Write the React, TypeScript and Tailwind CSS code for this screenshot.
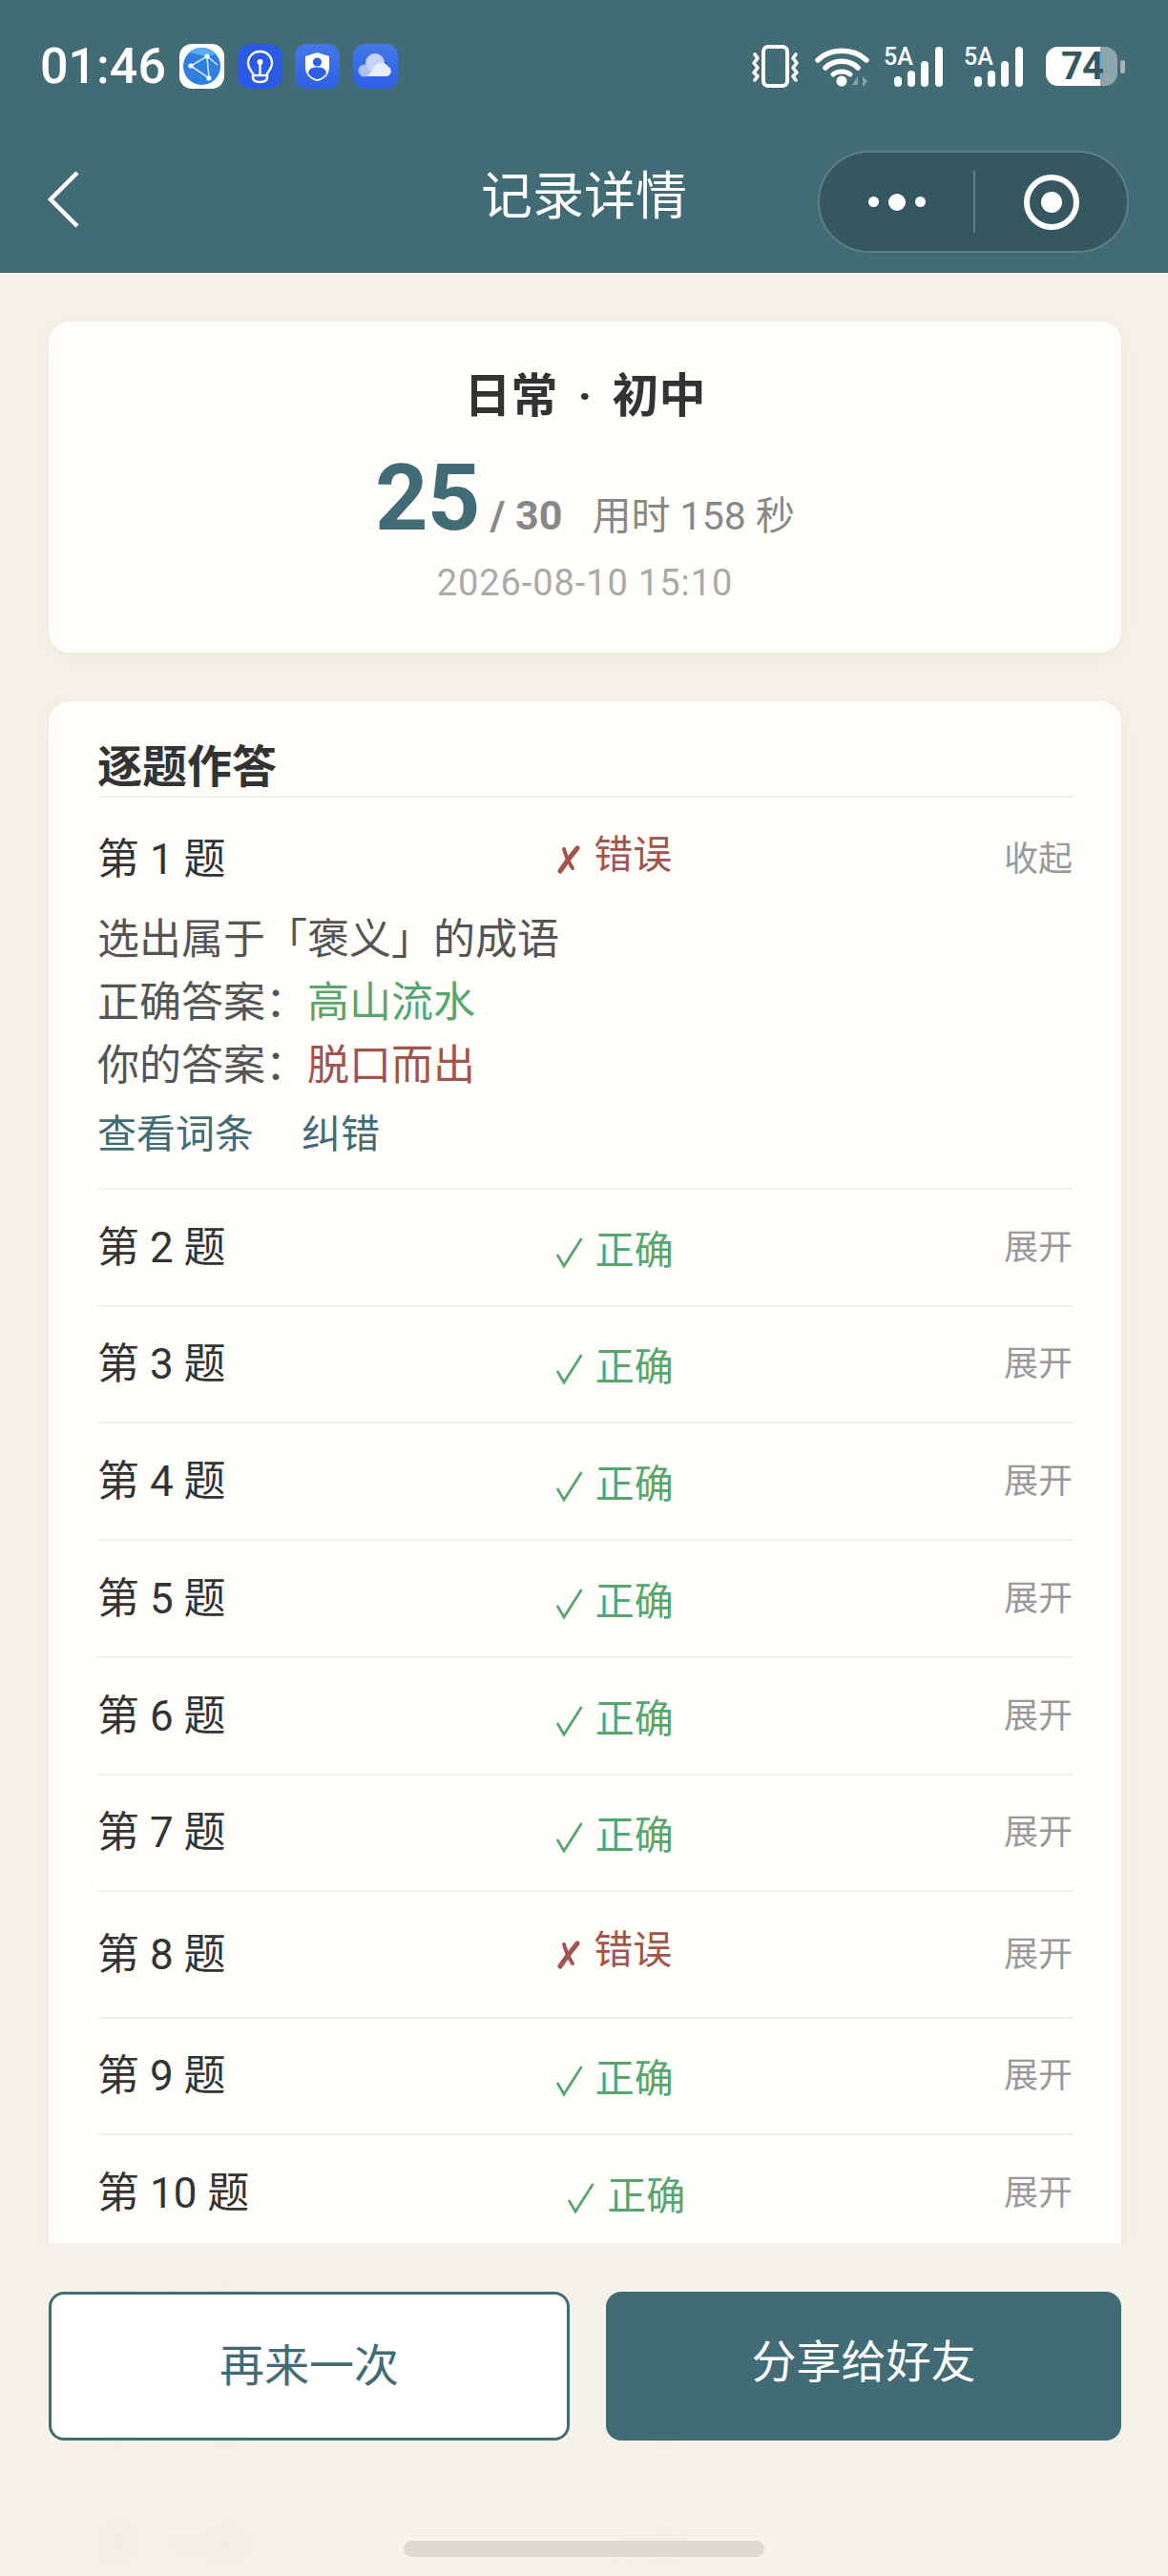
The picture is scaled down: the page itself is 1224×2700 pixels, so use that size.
import React from 'react';

const rows = [
    { n: 2, ok: true, h: 'h-[123px]' },
    { n: 3, ok: true, h: 'h-[122px]' },
    { n: 4, ok: true, h: 'h-[123px]' },
    { n: 5, ok: true, h: 'h-[123px]' },
    { n: 6, ok: true, h: 'h-[123px]' },
    { n: 7, ok: true, h: 'h-[122px]' },
    { n: 8, ok: false, h: 'h-[133px]' },
    { n: 9, ok: true, h: 'h-[122px]' },
    { n: 10, ok: true, h: 'h-[123px]' },
    { n: 11, ok: true, h: 'h-[123px]' },
    { n: 12, ok: true, h: 'h-[123px]' },
    { n: 13, ok: true, h: 'h-[123px]' },
];

const Status = ({ ok }: { ok: boolean }) =>
    ok ? (
        <div className="flex items-center gap-[13px] mt-[6px] text-[41px] leading-[50px] text-[#55a76e]">
            <svg width="28" height="34" viewBox="0 0 28 34" fill="none" className="mt-[4px]">
                <path d="M1 19 L8 31 L26.5 2" stroke="currentColor" strokeWidth="2.8" />
            </svg>
            <span>正确</span>
        </div>
    ) : (
        <div className="flex items-center gap-[14px] mb-[10px] text-[41px] leading-[50px] text-[#a2544e]">
            <svg width="24" height="30" viewBox="0 0 24 30" fill="none" className="mt-[10px]">
                <path d="M3 27 C9 18 15 10 21 3" stroke="currentColor" strokeWidth="5" strokeLinecap="round" />
                <path d="M7 4 C9 11 12 18 16 24" stroke="currentColor" strokeWidth="4" strokeLinecap="round" />
            </svg>
            <span>错误</span>
        </div>
    );

const Signal = () => (
    <div className="relative w-[70px] h-[45px]">
        <span className="absolute left-0 top-0 text-[25px] leading-[25px] font-medium text-white">5A</span>
        <svg width="70" height="45" viewBox="0 0 70 45" fill="white">
            <rect x="11" y="33" width="8" height="11" rx="4" />
            <rect x="25" y="27" width="8" height="17" rx="4" />
            <rect x="39" y="17" width="8" height="27" rx="4" />
            <rect x="54" y="2" width="8" height="42" rx="4" />
        </svg>
    </div>
);

const StatusBar = () => (
    <div className="flex items-center justify-between h-[140px] pl-[42px] pr-[45px] pb-[1px] text-white">
        <div className="flex items-center">
            <span className="w-[146px] text-[52px] leading-[50px] font-medium">01:46</span>
            <div className="flex gap-[13.5px]">
                <svg width="47" height="47" viewBox="0 0 47 47">
                    <rect width="47" height="47" rx="13" fill="#fff" />
                    <circle cx="23.5" cy="23.5" r="19.5" fill="#2f7fe0" />
                    <path d="M10 9 A19.5 19.5 0 0 1 38 11 L28 13 Z" fill="#58abf0" />
                    <path d="M12 23 L29 13 L31 36 M12 23 L31 36 M29 13 L40 22" stroke="#cfe6fb" strokeWidth="1.6" fill="none" />
                    <circle cx="12" cy="23" r="2.6" fill="#fff" />
                    <circle cx="29" cy="13" r="2.6" fill="#fff" />
                    <circle cx="31" cy="36" r="2.6" fill="#fff" />
                </svg>
                <svg width="47" height="47" viewBox="0 0 47 47">
                    <rect width="47" height="47" rx="14" fill="#2a5ae6" />
                    <path d="M23.5 8 C15.5 8 11 14 11 20 C11 25 14 28 16 31 L16 35 C16 38 18 40 23.5 40 C29 40 31 38 31 35 L31 31 C33 28 36 25 36 20 C36 14 31.5 8 23.5 8 Z" fill="none" stroke="#fff" strokeWidth="2.4" />
                    <path d="M16 33 L31 33" stroke="#fff" strokeWidth="2.4" />
                    <path d="M23.5 20 L23.5 32" stroke="#fff" strokeWidth="2.4" />
                    <circle cx="23.5" cy="19" r="3" fill="#fff" />
                </svg>
                <svg width="47" height="47" viewBox="0 0 47 47">
                    <defs>
                        <linearGradient id="sh" x1="0" y1="0" x2="0" y2="1">
                            <stop offset="0" stopColor="#4478e6" />
                            <stop offset="1" stopColor="#2c5fe6" />
                        </linearGradient>
                    </defs>
                    <rect width="47" height="47" rx="12" fill="url(#sh)" />
                    <path d="M23.5 9 L36 13 L36 25 C36 33 29 38 23.5 39 C18 38 11 33 11 25 L11 13 Z" fill="#fff" />
                    <circle cx="23.5" cy="19" r="4.6" fill="#2c5fe6" />
                    <path d="M14 31 C15 25 19 24.5 23.5 24.5 C28 24.5 32 25 33 31 C30 35 27 36.5 23.5 37 C20 36.5 17 35 14 31 Z" fill="#2c5fe6" />
                </svg>
                <svg width="47" height="47" viewBox="0 0 47 47">
                    <defs>
                        <linearGradient id="cl" x1="0" y1="0" x2="0" y2="1">
                            <stop offset="0" stopColor="#4478e6" />
                            <stop offset="1" stopColor="#2c5fe6" />
                        </linearGradient>
                    </defs>
                    <rect width="47" height="47" rx="12" fill="url(#cl)" />
                    <circle cx="12" cy="28" r="6.5" fill="#a9c2f6" />
                    <circle cx="23" cy="20" r="10" fill="#c4d4f9" />
                    <path d="M12 34 C20 34 19 21 29 20 C35 20 36 23 37 24 C41 25 41 34 35 34 Z" fill="#e8edfb" />
                </svg>
            </div>
        </div>
        <div className="flex items-center">
            <svg width="52" height="46" viewBox="0 0 52 46" fill="none" stroke="white">
                <rect x="13" y="2" width="25" height="41" rx="5" strokeWidth="4" />
                <path d="M4 10 L7 14 L3 19 L7 24 L3 29 L7 33 L4 37" strokeWidth="3.6" strokeLinecap="round" strokeLinejoin="round" />
                <path d="M47 10 L44 14 L48 19 L44 24 L48 29 L44 33 L47 37" strokeWidth="3.6" strokeLinecap="round" strokeLinejoin="round" />
            </svg>
            <svg width="58" height="44" viewBox="0 0 58 44" fill="none" className="ml-[15px]">
                <path d="M3 15 C16 2 40 2 54 15" stroke="white" strokeWidth="5.5" strokeLinecap="round" />
                <path d="M11 23 C20 14 36 14 45 23" stroke="white" strokeWidth="5.5" strokeLinecap="round" />
                <path d="M19 30 C24 26 32 26 37 30" stroke="white" strokeWidth="5" strokeLinecap="round" />
                <circle cx="28" cy="37" r="5.5" fill="white" />
                <path d="M39 41 L45 32 L45 41 Z M50 32 L50 43 L55 37 Z" fill="#8ba3a8" />
            </svg>
            <div className="ml-[14px]">
                <Signal />
            </div>
            <div className="ml-[14px]">
                <Signal />
            </div>
            <div className="relative ml-[16px] w-[75px] h-[41px] rounded-[13px] bg-white/40">
                <div className="absolute left-0 top-0 bottom-0 w-[57px] rounded-l-[13px] bg-white" />
                <span className="absolute left-[16px] top-0 text-[40px] leading-[41px] font-bold text-[#35575f] tracking-[-1px]">74</span>
            </div>
            <div className="ml-[3px] w-[5px] h-[14px] rounded-[3px] bg-white/50" />
        </div>
    </div>
);

const NavBar = () => (
    <div className="relative flex items-center justify-center h-[146px] pb-[12px] text-white">
        <svg width="34" height="60" viewBox="0 0 34 60" fill="none" className="absolute left-[49px] top-[39px]">
            <path d="M32 2 L4 30 L32 58" stroke="white" strokeWidth="4.5" />
        </svg>
        <span className="text-[54px] leading-[60px] font-normal">记录详情</span>
        <div className="absolute left-[857px] top-[18px] flex items-center w-[326px] h-[107px] rounded-full bg-[#35575f] border-2 border-[#5f7e85]">
            <div className="flex items-center justify-center w-[161px] gap-[10px]">
                <span className="w-[11px] h-[11px] rounded-full bg-white" />
                <span className="w-[18px] h-[18px] rounded-full bg-white" />
                <span className="w-[11px] h-[11px] rounded-full bg-white" />
            </div>
            <div className="w-[2px] h-[65px] bg-[#5f7e85]" />
            <div className="flex items-center justify-center flex-1">
                <div className="flex items-center justify-center w-[58px] h-[58px] rounded-full border-[6px] border-white">
                    <span className="w-[22px] h-[22px] rounded-full bg-white" />
                </div>
            </div>
        </div>
    </div>
);

const App: React.FC = () => {
    return (
        <div className="relative w-[1224px] h-[2700px] overflow-hidden bg-[#f5f1e6] font-['Roboto','Noto_Sans_CJK_SC',sans-serif]">
            {/* Header */}
            <div className="h-[286px] bg-[#426c75]">
                <StatusBar />
                <NavBar />
            </div>

            <div className="pl-[51px] pr-[49px] pt-[51px]">
                {/* Summary */}
                <div className="flex flex-col items-center h-[347px] pt-[49px] rounded-[22px] bg-[#fffefa] shadow-[0_4px_20px_rgba(0,0,0,0.04)]">
                    <div className="text-[49px] leading-[60px] font-bold text-[#333] [word-spacing:9px]">日常 · 初中</div>
                    <div className="flex items-baseline mt-[21px]">
                        <span className="text-[97px] leading-[110px] font-bold tracking-[-1px] text-[#426c75]">25</span>
                        <span className="ml-[11px] text-[43px] font-bold text-[#888]">/ 30</span>
                        <span className="ml-[31px] text-[41px] text-[#888]">用时 158 秒</span>
                    </div>
                    <div className="mt-[9px] text-[38px] leading-[50px] tracking-[0.9px] text-[#aaa]">2026-08-10 15:10</div>
                </div>

                {/* Answers */}
                <div className="mt-[51px] px-[51px] rounded-[22px] bg-[#fffefa] shadow-[0_4px_20px_rgba(0,0,0,0.04)]">
                    <div className="flex items-end h-[101px] border-b-2 border-[#f0f0f0] text-[47px] leading-[60px] font-bold text-[#333]">
                        逐题作答
                    </div>

                    <div className="h-[411px] border-b-2 border-[#f0f0f0]">
                        <div className="flex items-center justify-between h-[116px] pt-[14px]">
                            <span className="text-[44px] leading-[50px] text-[#333]">第 1 题</span>
                            <Status ok={false} />
                            <span className="text-[36px] leading-[50px] text-[#999]">收起</span>
                        </div>
                        <div className="text-[44px] leading-[66px] text-[#555]">
                            <div>选出属于「褒义」的成语</div>
                            <div>
                                正确答案：<span className="text-[#55a76e]">高山流水</span>
                            </div>
                            <div>
                                你的答案：<span className="text-[#a2544e]">脱口而出</span>
                            </div>
                        </div>
                        <div className="flex gap-[50px] mt-[9px] text-[41px] leading-[60px] text-[#426c75]">
                            <span>查看词条</span>
                            <span>纠错</span>
                        </div>
                    </div>

                    {rows.map((r) => (
                        <div key={r.n} className={`flex items-center justify-between border-b-2 border-[#f0f0f0] ${r.h}`}>
                            <span className="text-[44px] leading-[50px] text-[#333]">第 {r.n} 题</span>
                            <Status ok={r.ok} />
                            <span className="text-[36px] leading-[50px] text-[#999]">展开</span>
                        </div>
                    ))}
                </div>
            </div>

            {/* Bottom bar */}
            <div className="absolute left-0 right-0 bottom-0 h-[349px] pl-[51px] pr-[49px] pt-[51px] bg-[#f4f1e8]/95 backdrop-blur-md">
                <div className="flex gap-[38px]">
                    <button className="w-[546px] h-[156px] rounded-[16px] bg-white border-[3px] border-[#426c75] text-[47px] text-[#426c75]">
                        再来一次
                    </button>
                    <button className="w-[540px] h-[156px] rounded-[16px] bg-[#426c75] pb-[8px] text-[47px] text-white">
                        分享给好友
                    </button>
                </div>
            </div>

            {/* Home indicator */}
            <div className="absolute left-[423px] top-[2663px] w-[378px] h-[17px] rounded-full bg-[#dddbd3]" />
        </div>
    );
};

export default App;
